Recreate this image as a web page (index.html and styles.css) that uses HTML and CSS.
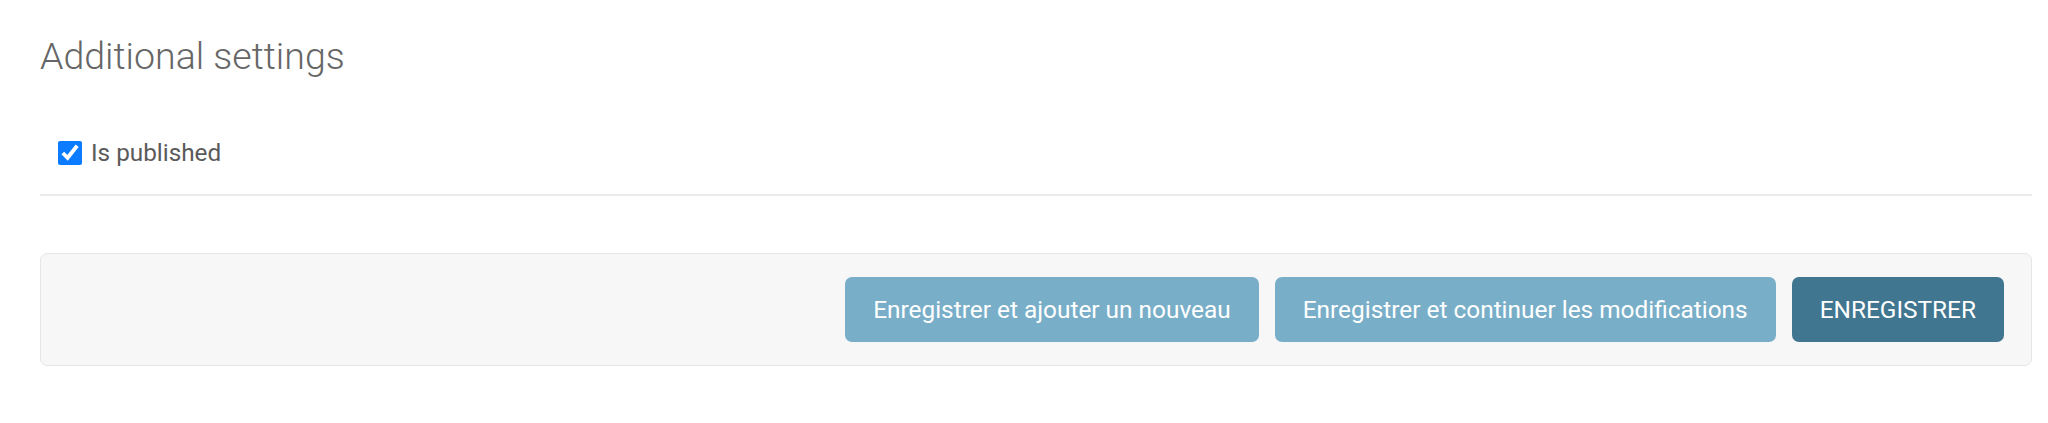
FILE: index.html
```html
<!DOCTYPE html>
<html lang="fr">
<head>
  <meta charset="UTF-8">
  <meta name="viewport" content="width=device-width, initial-scale=1.0">
  <title>Additional settings</title>
  <link rel="stylesheet" href="styles.css">
</head>
<body>
  <form class="page" onsubmit="return false;">
    <fieldset class="module">
      <h2 class="module-title">Additional settings</h2>

      <div class="form-row">
        <input type="checkbox" id="is_published" name="is_published" checked>
        <label for="is_published">Is published</label>
      </div>
    </fieldset>

    <div class="submit-row">
      <button type="submit" class="button">Enregistrer et ajouter un nouveau</button>
      <button type="submit" class="button">Enregistrer et continuer les modifications</button>
      <button type="submit" class="button default">ENREGISTRER</button>
    </div>
  </form>
</body>
</html>
```

FILE: styles.css
```css
body {
  margin: 0;
  font-family: Roboto, "Liberation Sans", Arial, sans-serif;
  background: #fff;
  color: #555;
}
.page {
  padding: 34px 16px 0 40px;
}
.module {
  border: none;
  margin: 0;
  padding: 0;
}
.module-title {
  margin: 0;
  font-size: 37.5px;
  font-weight: 300;
  line-height: 44px;
  color: #666;
}
.form-row {
  display: flex;
  align-items: center;
  gap: 9px;
  padding: 60px 0 26px 18px;
  border-bottom: 2px solid #ebebeb;
  font-size: 24.3px;
  line-height: 30px;
}
.form-row input[type="checkbox"] {
  width: 24px;
  height: 24px;
  margin: 0;
  accent-color: #0b7bff;
}
.form-row label {
  color: #5a5a5a;
}
.submit-row {
  display: flex;
  justify-content: flex-end;
  gap: 16px;
  margin-top: 57px;
  padding: 23px 27px;
  background: #f7f7f7;
  border: 1px solid #e6e6e6;
  border-radius: 7px;
}
.button {
  height: 65px;
  padding: 0 28px;
  border: none;
  border-radius: 7px;
  background-color: #79aec8;
  color: #fff;
  font-family: inherit;
  font-size: 24.4px;
  cursor: pointer;
}
.button:hover {
  background-color: #609ab6;
}
.button.default {
  background-color: #417690;
}
.button.default:hover {
  background-color: #205067;
}
```
